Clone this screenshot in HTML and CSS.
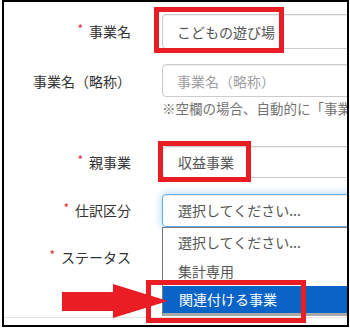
FILE: index.html
```html
<!DOCTYPE html>
<html lang="ja">

<head>
    <meta charset="UTF-8">
    <title>事業登録</title>
    <link rel="stylesheet" href="styles.css">
</head>

<body>
    <div class="frame">
        <form class="form">
            <div class="row">
                <label class="label"><span class="req">*</span>事業名</label>
                <input type="text" class="control" value="こどもの遊び場">
            </div>
            <div class="row row-2">
                <label class="label">事業名（略称）</label>
                <input type="text" class="control control-sm" placeholder="事業名（略称）">
            </div>
            <p class="help">※空欄の場合、自動的に「事業名」が設定されます</p>
            <div class="row row-3">
                <label class="label"><span class="req">*</span>親事業</label>
                <div class="control control-static">収益事業</div>
            </div>
            <div class="row row-4">
                <label class="label"><span class="req">*</span>仕訳区分</label>
                <div class="select-wrap">
                    <div class="control control-select">選択してください...</div>
                    <ul class="options">
                        <li>選択してください...</li>
                        <li>集計専用</li>
                        <li class="active">関連付ける事業</li>
                    </ul>
                </div>
            </div>
            <div class="row row-5">
                <label class="label"><span class="req">*</span>ステータス</label>
            </div>
            <div class="divider"></div>
        </form>

        <!-- annotation marks -->
        <svg class="marks" viewBox="4 2 343 323" width="343" height="323">
            <rect x="156.5" y="9.5" width="125" height="41" />
            <rect x="160.5" y="143.5" width="88" height="36" />
            <rect x="148.5" y="282.5" width="155" height="38" />
            <polygon points="62,292 113,292 113,284 168,301 113,318 113,311 62,311" />
        </svg>
    </div>
</body>

</html>
```

FILE: styles.css
```css
body {
    margin: 0;
    background: #fff;
    font-family: "Noto Sans CJK JP", "Noto Sans", sans-serif;
    font-size: 14px;
    color: #333;
}

.frame {
    position: relative;
    margin-left: 2px;
    width: 347px;
    height: 327px;
    box-sizing: border-box;
    border: 2px solid #000;
    overflow: hidden;
}

.form {
    padding-top: 12px;
}

.row {
    display: flex;
    align-items: center;
    gap: 31px;
}

.label {
    flex: 0 0 127px;
    text-align: right;
    line-height: 20px;
    white-space: nowrap;
}

.req {
    color: #e3262f;
    font-size: 12px;
    margin-right: 6px;
    position: relative;
    top: -3px;
}

.control {
    box-sizing: border-box;
    flex: 0 0 260px;
    height: 35px;
    padding: 0 14px;
    border: 1px solid #ccc;
    border-radius: 4px;
    font-family: inherit;
    font-size: 14px;
    color: #555;
    background: #fff;
    box-shadow: inset 0 1px 1px rgba(0, 0, 0, 0.075);
    outline: none;
}

.control::placeholder {
    color: #a0a0a0;
}

.control-sm {
    height: 33px;
}

.row-2 {
    margin-top: 15px;
}

.help {
    margin: 1px 0 0 158px;
    line-height: 20px;
    font-size: 13.5px;
    color: #737373;
    white-space: nowrap;
}

.row-3 {
    margin-top: 28px;
}

.control-static {
    height: 32px;
    line-height: 30px;
    padding-left: 15px;
}

.row-4 {
    margin-top: 16px;
}

.select-wrap {
    position: relative;
    flex: 0 0 260px;
}

.control-select {
    height: 33px;
    line-height: 31px;
    padding-left: 15px;
    border-color: #66afe9;
    box-shadow: inset 0 1px 1px rgba(0, 0, 0, 0.075), 0 0 8px rgba(102, 175, 233, 0.6);
}

.options {
    position: absolute;
    top: 100%;
    left: 0;
    right: 0;
    margin: 0;
    padding: 0;
    list-style: none;
    background: #fff;
    border-left: 1px solid #7a7a7a;
    border-top: 1px solid #7a7a7a;
    border-bottom: 3px solid #a8a8a8;
    z-index: 2;
}

.options li {
    height: 29px;
    line-height: 29px;
    padding-left: 15px;
    color: #555;
}

.options li.active {
    height: 27px;
    line-height: 27px;
    padding-left: 16px;
    background: #0a64c8;
    color: #fff;
}

.row-5 {
    margin-top: 15px;
    height: 30px;
}

.divider {
    margin-top: 45px;
    height: 1px;
    background: #e3e3e3;
}

.marks {
    position: absolute;
    left: 0;
    top: 0;
    z-index: 3;
}

.marks rect {
    fill: none;
    stroke: #ea1c24;
    stroke-width: 5;
}

.marks polygon {
    fill: #ea1c24;
}
```
